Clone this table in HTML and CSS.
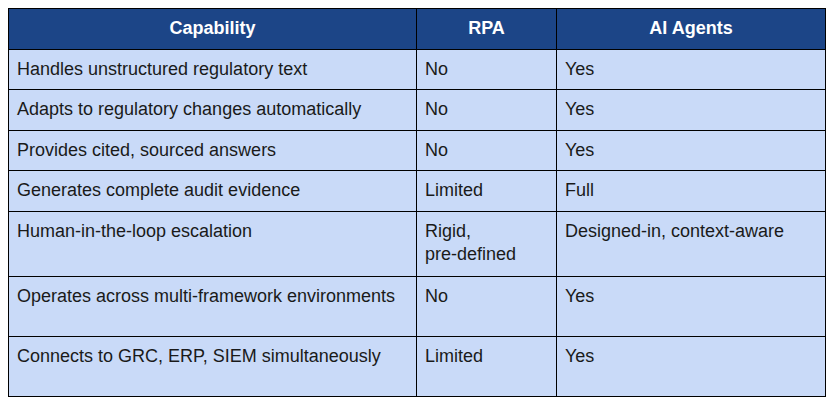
FILE: index.html
```html
<!DOCTYPE html>
<html lang="en">
<head>
<meta charset="utf-8">
<title>RPA vs AI Agents</title>
<link rel="stylesheet" href="styles.css">
</head>
<body>
<table class="compare">
  <colgroup>
    <col class="c-cap">
    <col class="c-rpa">
    <col class="c-ai">
  </colgroup>
  <thead>
    <tr>
      <th>Capability</th>
      <th>RPA</th>
      <th>AI Agents</th>
    </tr>
  </thead>
  <tbody>
    <tr><td>Handles unstructured regulatory text</td><td>No</td><td>Yes</td></tr>
    <tr><td>Adapts to regulatory changes automatically</td><td>No</td><td>Yes</td></tr>
    <tr><td>Provides cited, sourced answers</td><td>No</td><td>Yes</td></tr>
    <tr><td>Generates complete audit evidence</td><td>Limited</td><td>Full</td></tr>
    <tr><td>Human-in-the-loop escalation</td><td>Rigid,<br>pre-defined</td><td>Designed-in, context-aware</td></tr>
    <tr class="tall"><td>Operates across multi-framework environments</td><td>No</td><td>Yes</td></tr>
    <tr class="tall"><td>Connects to GRC, ERP, SIEM simultaneously</td><td>Limited</td><td>Yes</td></tr>
  </tbody>
</table>
</body>
</html>
```

FILE: styles.css
```css
html, body {
  margin: 0;
  padding: 0;
  background: #ffffff;
}
body {
  padding: 8px;
  font-family: "Liberation Sans", Arial, sans-serif;
  font-size: 18px;
  color: #1a1a1a;
}
.compare {
  border-collapse: collapse;
  table-layout: fixed;
  width: 817px;
}
.c-cap { width: 408px; }
.c-rpa { width: 140px; }
.c-ai { width: 269px; }
.compare th,
.compare td {
  border: 1px solid #000000;
  padding: 8px 8px;
  line-height: 23.5px;
  vertical-align: top;
  text-align: left;
}
.compare th {
  background: #1c4587;
  color: #ffffff;
  font-weight: bold;
  text-align: center;
}
.compare td {
  background: #c9daf8;
}
.compare tr:nth-child(5) td {
  padding-bottom: 9px;
}
.compare tr.tall td {
  height: 43px;
}
```
